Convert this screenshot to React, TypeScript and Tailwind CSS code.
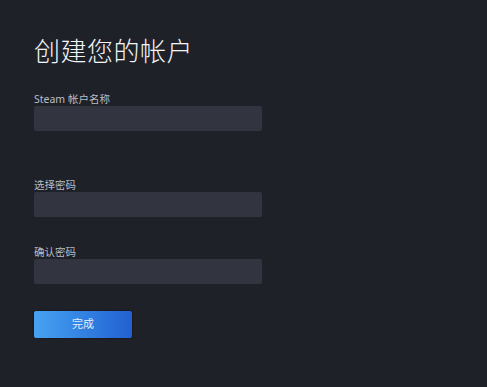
import React from 'react';

const fields = [
    { label: 'Steam 帐户名称', type: 'text', gap: 'mt-[26px]' },
    { label: '选择密码', type: 'password', gap: 'mt-[48px]' },
    { label: '确认密码', type: 'password', gap: 'mt-[29px]' },
];

const App = () => {
    return (
        <div
            className="w-[487px] h-[387px] bg-[#1f2128] pl-[34px] pt-[35px] overflow-hidden"
            style={{ fontFamily: '"Noto Sans", "Noto Sans CJK SC", sans-serif' }}
        >
            <h1 className="text-[26px] leading-[32px] font-light text-[#f2f4f7] tracking-[0.5px]">创建您的帐户</h1>

            {fields.map((field) => (
                <div key={field.label} className={field.gap}>
                    <label className="block text-[10.5px] leading-[12px] text-[#b9bdc4]">{field.label}</label>
                    <input
                        type={field.type}
                        className="mt-[1px] block w-[228px] h-[25px] rounded-[2px] bg-[#32353f] outline-none border-none"
                    />
                </div>
            ))}

            <button className="mt-[27px] w-[98px] h-[27px] rounded-[2px] bg-gradient-to-r from-[#47a3f2] to-[#2360d1] text-[11px] text-[#e3eefa] shadow-[0_0_2px_rgba(0,0,0,0.6)]">
                完成
            </button>
        </div>
    );
};

export default App;
